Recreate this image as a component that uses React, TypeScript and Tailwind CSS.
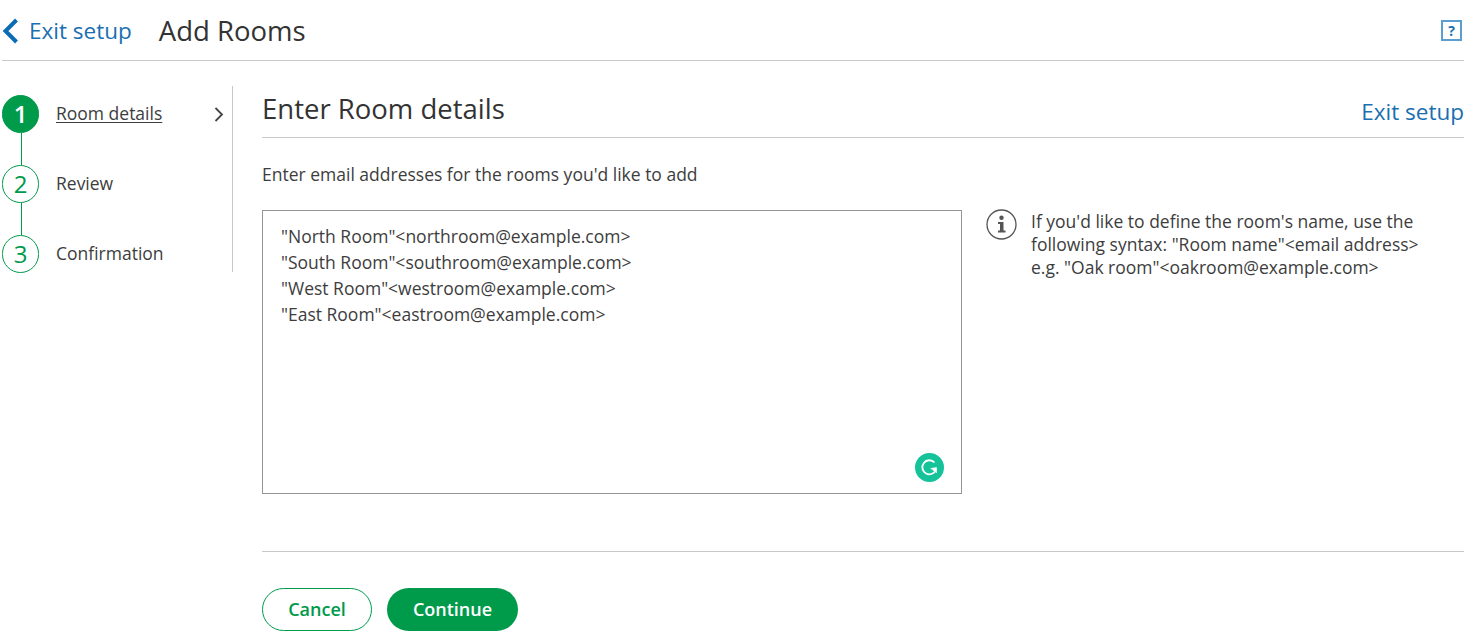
import React from 'react';

const steps = [
    { n: 1, label: 'Room details' },
    { n: 2, label: 'Review' },
    { n: 3, label: 'Confirmation' },
];

const rooms = `"North Room"<northroom@example.com>
"South Room"<southroom@example.com>
"West Room"<westroom@example.com>
"East Room"<eastroom@example.com>`;

const StepList: React.FC = () => (
    <div className="w-[231px] h-[186px] border-r border-[#c8c8c8] pt-[9px] relative">
        {steps.map((step, i) => (
            <div key={step.n} className="flex h-[70px] relative">
                <div className={`w-[37px] h-[38px] rounded-full border border-[#009a4b] flex items-center justify-center text-[24px] leading-none ${i === 0 ? 'bg-[#009a4b] text-white font-semibold' : 'bg-white text-[#009a4b]'}`}>
                    {step.n}
                </div>
                {i < 2 && <div className="absolute left-[19px] top-[38px] w-px h-[32px] bg-[#009a4b]" />}
                <div className={`ml-[17px] mt-[7px] h-[22px] text-[17.5px] leading-[22px] text-[#3d3d3d] ${i === 0 ? 'underline underline-offset-2' : ''}`}>{step.label}</div>
                {i === 0 && (
                    <svg className="absolute left-[211px] top-[11px]" width="12" height="16" viewBox="0 0 12 16" fill="none" stroke="#444" strokeWidth="1.8">
                        <path d="M2.5 2 L9 8.5 L2.5 15" />
                    </svg>
                )}
            </div>
        ))}
    </div>
);

const App: React.FC = () => {
    return (
        <div className="h-[640px] w-[1477px] overflow-hidden bg-white pl-[2px] pr-[13px] text-[#3d3d3d] font-['Open_Sans',sans-serif]">
            <header className="h-[61px] border-b border-[#c8c8c8] flex items-center">
                <svg className="mt-[2px]" width="18" height="28" viewBox="0 0 18 28" fill="none" stroke="#0a6cb5" strokeWidth="4">
                    <path d="M14.5 3 L3.5 14 L14.5 25" />
                </svg>
                <a className="ml-[9px] text-[22.5px] text-[#1a6fb0] leading-8 mt-[1px]">Exit setup</a>
                <h1 className="ml-[27px] mt-[1px] text-[27.5px] leading-8 text-[#333]">Add Rooms</h1>
                <div className="ml-auto mr-[2px] mt-[1px] w-[21px] h-[21px] border-2 border-[#5b9fd1] flex items-center justify-center text-[14px] font-bold text-[#1a6fb0] leading-none">?</div>
            </header>
            <div className="flex mt-[25px]">
                <StepList />
                <main className="ml-[29px] flex-1">
                    <div className="h-[52px] border-b border-[#c8c8c8] flex justify-between">
                        <h2 className="text-[27.5px] leading-[45px] text-[#333]">Enter Room details</h2>
                        <a className="text-[22.5px] leading-[51px] text-[#1a6fb0]">Exit setup</a>
                    </div>
                    <p className="mt-[24px] text-[17.5px] leading-6 text-[#3d3d3d]">Enter email addresses for the rooms you'd like to add</p>
                    <div className="flex mt-[24px]">
                        <div className="relative w-[700px] h-[284px] border border-[#959595] pl-[18px] pt-[12px] text-[17.5px] leading-[26px] whitespace-pre-wrap">
                            {rooms}
                            <div className="absolute right-[17px] bottom-[11px] w-[29px] h-[29px] rounded-full bg-[#15c39a] flex items-center justify-center">
                                <svg width="19" height="19" viewBox="0 0 19 19" fill="none" stroke="#fff" strokeWidth="1.8">
                                    <path d="M14.5 4.5 A7 7 0 1 0 16 11.5" />
                                    <path d="M10.5 10.5 L16.5 9.5 L16.5 15" fill="#fff" strokeWidth="0.6" />
                                </svg>
                            </div>
                        </div>
                        <svg className="ml-[24px] mt-[-1px] shrink-0" width="31" height="31" viewBox="0 0 31 31">
                            <circle cx="15.5" cy="15.5" r="14.5" fill="none" stroke="#555" strokeWidth="1.3" />
                            <circle cx="15.5" cy="8.7" r="2.2" fill="#555" />
                            <path d="M12 13 H17.5 V21.5 H19.5 V23.5 H12 V21.5 H14 V15 H12 Z" fill="#555" />
                        </svg>
                        <p className="ml-[14px] w-[420px] text-[17.5px] leading-[23px]">
                            If you'd like to define the room's name, use the following syntax: "Room name"&lt;email address&gt; e.g. "Oak room"&lt;oakroom@example.com&gt;
                        </p>
                    </div>
                    <div className="mt-[57px] border-t border-[#c8c8c8]" />
                    <div className="flex gap-[15px] mt-[36px]">
                        <button className="w-[110px] h-[43px] rounded-full border border-[#009a4b] text-[#009a4b] font-semibold text-[18px] bg-white">Cancel</button>
                        <button className="w-[131px] h-[43px] rounded-full bg-[#009a4b] text-white font-semibold text-[18px]">Continue</button>
                    </div>
                </main>
            </div>
        </div>
    );
};

export default App;
